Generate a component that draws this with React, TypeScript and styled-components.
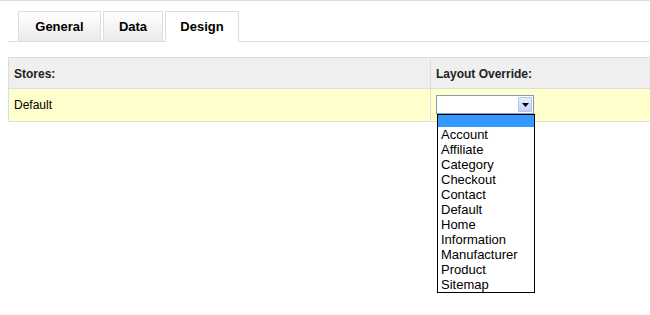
import { FC } from 'react';
import styled, { createGlobalStyle } from 'styled-components';

const GlobalStyle = createGlobalStyle`
  html {
    overflow: hidden;
  }
  html, body {
    margin: 0;
    padding: 0;
    background: #ffffff;
  }
  body {
    min-height: 100vh;
    font-family: "Liberation Sans", Arial, Helvetica, sans-serif;
    font-size: 12px;
    color: #000000;
  }
`;

const tabs = [
  { label: 'General', width: 83 },
  { label: 'Data', width: 60 },
  { label: 'Design', width: 74 },
];

const layouts = [
  'Account',
  'Affiliate',
  'Category',
  'Checkout',
  'Contact',
  'Default',
  'Home',
  'Information',
  'Manufacturer',
  'Product',
  'Sitemap',
];

const App: FC = () => {
  return (
    <>
      <GlobalStyle />
      <TopRule />
      <Page>
        <TabBar>
          {tabs.map((t) => (
            <Tab key={t.label} $w={t.width} $selected={t.label === 'Design'}>
              {t.label}
            </Tab>
          ))}
        </TabBar>
        <List>
          <HeadCell>Stores:</HeadCell>
          <HeadCell>Layout Override:</HeadCell>
          <BodyCell>Default</BodyCell>
          <BodyCell>
            <SelectWrap>
              <SelectBox>
                <SelectValue />
                <ArrowButton>
                  <svg width="7" height="4" viewBox="0 0 7 4">
                    <path d="M0 0h7L3.5 4z" fill="#000" />
                  </svg>
                </ArrowButton>
              </SelectBox>
              <Options>
                <Option $active $empty />
                {layouts.map((l) => (
                  <Option key={l}>{l}</Option>
                ))}
              </Options>
            </SelectWrap>
          </BodyCell>
        </List>
      </Page>
    </>
  );
};

export default App;

const TopRule = styled.div`
  height: 1px;
  background: #dddddd;
`;

const Page = styled.div`
  width: 760px;
  padding: 10px 0 0 8px;
`;

const TabBar = styled.div`
  display: flex;
  align-items: flex-start;
  height: 30px;
  padding-left: 10px;
  border-bottom: 1px solid #dddddd;
  margin-bottom: 15px;
`;

const Tab = styled.a<{ $selected?: boolean; $w: number }>`
  box-sizing: border-box;
  width: ${(p) => p.$w}px;
  text-align: center;
  border: 1px solid #dddddd;
  border-bottom: none;
  background: ${(p) => (p.$selected ? '#ffffff' : 'linear-gradient(to bottom, #ffffff, #eaeaea)')};
  padding: 7px 0 ${(p) => (p.$selected ? '7px' : '6px')};
  font-size: 13px;
  line-height: 16px;
  font-weight: bold;
  color: #000000;
  margin-right: 2px;
  text-decoration: none;
`;

const List = styled.div`
  display: grid;
  grid-template-columns: 422px 1fr;
  border-top: 1px solid #dddddd;
  border-left: 1px solid #dddddd;
`;

const HeadCell = styled.div`
  background: #efefef;
  color: #222222;
  font-weight: bold;
  line-height: 16px;
  padding: 8px 5px 6px;
  border-right: 1px solid #dddddd;
  border-bottom: 1px solid #dddddd;
`;

const BodyCell = styled.div`
  display: flex;
  align-items: center;
  background: #ffffcb;
  line-height: 16px;
  padding: 6px 5px 7px;
  min-height: 19px;
  border-right: 1px solid #dddddd;
  border-bottom: 1px solid #dddddd;
`;

const SelectWrap = styled.div`
  position: relative;
  width: 98px;
`;

const SelectBox = styled.div`
  display: flex;
  box-sizing: border-box;
  height: 19px;
  border: 1px solid #7f9db9;
  background: #ffffff;
  padding: 1px;
`;

const SelectValue = styled.div`
  flex: 1;
`;

const ArrowButton = styled.div`
  display: flex;
  align-items: center;
  justify-content: center;
  box-sizing: border-box;
  width: 14px;
  border: 1px solid #b2c3e6;
  border-radius: 1px;
  background: linear-gradient(to bottom, #e8effd, #c3d3f5);
`;

const Options = styled.div`
  position: absolute;
  top: 19px;
  left: 1px;
  width: 98px;
  box-sizing: border-box;
  border: 1px solid #000000;
  background: #ffffff;
  z-index: 2;
`;

const Option = styled.div<{ $active?: boolean; $empty?: boolean }>`
  height: ${(p) => (p.$empty ? '12px' : '15px')};
  line-height: 15px;
  padding-left: 3px;
  font-size: 13px;
  color: #000000;
  background: ${(p) => (p.$active ? '#3399ff' : 'transparent')};
  white-space: nowrap;
`;
